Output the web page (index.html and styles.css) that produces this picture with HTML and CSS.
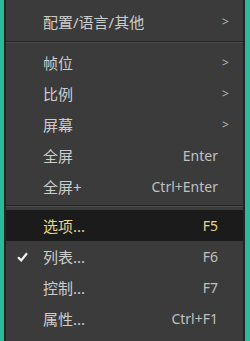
FILE: index.html
```html
<!DOCTYPE html>
<html lang="zh-CN">
<head>
  <meta charset="UTF-8" />
  <title>菜单</title>
  <link rel="stylesheet" href="styles.css">
</head>
<body>
  <div class="menu">
    <div class="item"><span class="check"></span><span class="label">配置/语言/其他</span><span class="key"></span><span class="arrow">&gt;</span></div>
    <div class="sep sep-wide"></div>
    <div class="item"><span class="check"></span><span class="label">帧位</span><span class="key"></span><span class="arrow">&gt;</span></div>
    <div class="item"><span class="check"></span><span class="label">比例</span><span class="key"></span><span class="arrow">&gt;</span></div>
    <div class="item"><span class="check"></span><span class="label">屏幕</span><span class="key"></span><span class="arrow">&gt;</span></div>
    <div class="item"><span class="check"></span><span class="label">全屏</span><span class="key">Enter</span><span class="arrow"></span></div>
    <div class="item"><span class="check"></span><span class="label">全屏+</span><span class="key">Ctrl+Enter</span><span class="arrow"></span></div>
    <div class="sep"></div>
    <div class="item active"><span class="check"></span><span class="label">选项...</span><span class="key">F5</span><span class="arrow"></span></div>
    <div class="item">
      <span class="check">
        <svg width="11" height="10" viewBox="0 0 11 10"><path d="M1 5.2 L4.2 8.4 L10 1.2" fill="none" stroke="#f2f2f2" stroke-width="2.2"/></svg>
      </span>
      <span class="label">列表...</span><span class="key">F6</span><span class="arrow"></span>
    </div>
    <div class="item"><span class="check"></span><span class="label">控制...</span><span class="key">F7</span><span class="arrow"></span></div>
    <div class="item"><span class="check"></span><span class="label">属性...</span><span class="key">Ctrl+F1</span><span class="arrow"></span></div>
    <div class="item"><span class="check"></span><span class="label">关于...</span><span class="key">F1</span><span class="arrow"></span></div>
  </div>
</body>
</html>
```
FILE: styles.css
```css
body { margin: 0; background: #29bb9c; font-family: "Noto Sans", "Noto Sans CJK SC", sans-serif; height: 341px; overflow: hidden; }

.menu {
  margin-left: 4px;
  width: 237px;
  height: 400px;
  padding-top: 6px;
  background: #3b3b3b;
  border-left: 2px solid #232323;
  border-right: 2px solid #232323;
}

.item { display: flex; align-items: center; height: 31px; color: #cdcdcd; font-size: 15px; }
.item.active { background: #1b1b1b; color: #e6d68e; }

.check { width: 37px; display: flex; padding-left: 11px; box-sizing: border-box; }
.label { flex: 1; }
.key { font-size: 14px; color: #c0c0c0; }
.item.active .key { color: #e6d68e; }
.arrow { width: 25px; padding-left: 4px; box-sizing: border-box; font-size: 12px; color: #b8b8b8; }

.sep { height: 2px; margin: 3px 0; border-top: 1px solid #242424; background: #4c4c4c; box-sizing: border-box; }
.sep-wide { margin: 4px 0; }
```
